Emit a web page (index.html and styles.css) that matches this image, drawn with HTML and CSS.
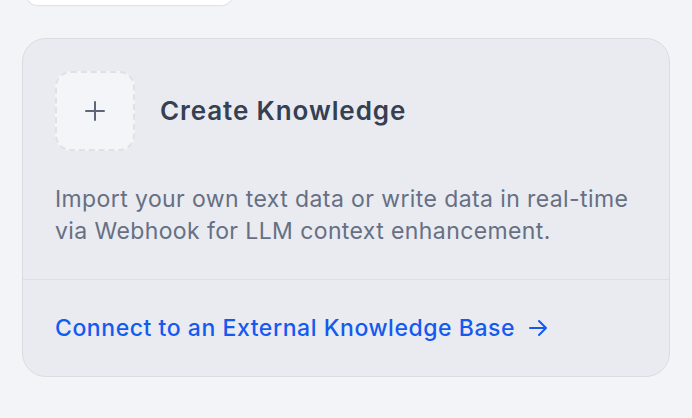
FILE: index.html
```html
<!DOCTYPE html>
<html lang="en">
<head>
<meta charset="utf-8">
<title>Create Knowledge</title>
<link rel="stylesheet" href="styles.css">
</head>
<body>
  <div class="prev-card"></div>
  <section class="card">
    <div class="card-main">
      <div class="head">
        <div class="add-box">
          <svg width="20" height="20" viewBox="0 0 20 20" fill="none" stroke="#5f6679" stroke-width="2" stroke-linecap="round"><path d="M10 1v18M1 10h18"/></svg>
        </div>
        <h2 class="title">Create Knowledge</h2>
      </div>
      <p class="desc">Import your own text data or write data in real-time via Webhook for LLM context enhancement.</p>
    </div>
    <div class="card-foot">
      <a class="ext-link" href="#">Connect to an External Knowledge Base
        <svg width="20" height="20" viewBox="0 0 20 20" fill="none" stroke="#155aef" stroke-width="2" stroke-linecap="round" stroke-linejoin="round"><path d="M2 10h16M11 3l7 7-7 7"/></svg>
      </a>
    </div>
  </section>
</body>
</html>
```
FILE: styles.css
```css
* { box-sizing: border-box; }
html, body { margin: 0; padding: 0; }
body {
  background: #f2f4f7;
  font-family: Inter, "Noto Sans", sans-serif;
  height: 418px;
  overflow: hidden;
}
.prev-card {
  margin: -20px 0 0 26px;
  width: 207px;
  height: 25px;
  background: #ffffff;
  border-radius: 12px;
  box-shadow: 0 1px 2px rgba(16, 24, 40, 0.06), 0 0 0 1px rgba(16, 24, 40, 0.03);
}
.card {
  margin: 33px 0 0 22px;
  width: 648px;
  background: #e9ebf0;
  border: 1px solid #d9dce3;
  border-radius: 24px;
}
.card-main {
  padding: 32px;
  border-bottom: 1px solid #dcdfe5;
}
.head {
  display: flex;
  align-items: center;
  gap: 25px;
}
.add-box {
  width: 80px;
  height: 80px;
  border: 2px dashed #dfe1e7;
  border-radius: 16px;
  background: #f4f5f8;
  display: flex;
  align-items: center;
  justify-content: center;
  flex: none;
}
.title {
  margin: 0;
  font-size: 26px;
  font-weight: 600;
  letter-spacing: 0.9px;
  color: #354052;
  line-height: 32px;
}
.desc {
  margin: 32px 0 0;
  font-size: 23px;
  line-height: 32px;
  letter-spacing: 0.4px;
  color: #676f83;
}
.card-foot {
  padding: 32px;
}
.ext-link {
  display: inline-flex;
  align-items: center;
  gap: 13px;
  font-size: 23px;
  line-height: 32px;
  font-weight: 500;
  letter-spacing: 0.55px;
  color: #155aef;
  text-decoration: none;
}
.ext-link svg { flex: none; }
```
